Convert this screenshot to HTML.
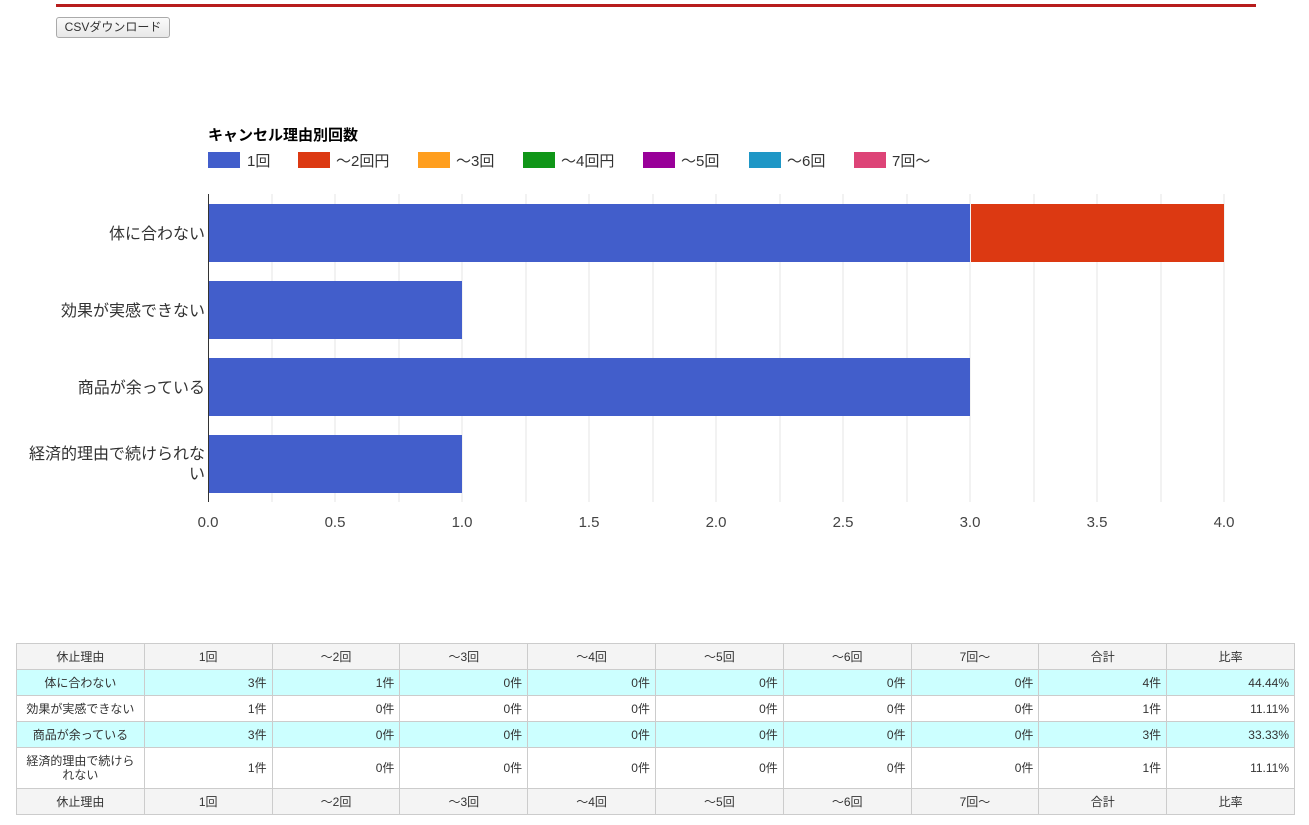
<!DOCTYPE html>
<html><head><meta charset="utf-8"><style>
body{margin:0;width:1309px;height:825px;background:#fff;font-family:"Liberation Sans","Noto Sans CJK JP",sans-serif;position:relative;overflow:hidden}
.bar{position:absolute;left:56px;top:4px;width:1200px;height:3px;background:#b71c1c}
.btn{position:absolute;left:56px;top:17px;border:1px solid #aaa;border-radius:3px;background:linear-gradient(#fafafa,#e8e8e8);font-size:12px;color:#333;text-align:center;line-height:19px;box-sizing:border-box;width:114px;height:21px}
svg{position:absolute;left:0;top:0}
table{position:absolute;left:16px;top:643px;border-collapse:collapse;width:1279px;table-layout:fixed;font-size:12px;color:#333}
td,th{border:1px solid #ccc;padding:0 5px;height:25px;font-weight:normal}
th{background:#f4f4f4;text-align:center}
td{text-align:right}
td.n{text-align:center;padding:0 2px}
tr.c td{background:#ccffff}
tr.t td{height:40px;line-height:14px}
</style></head><body>
<div class="bar"></div>
<div class="btn">CSVダウンロード</div>
<svg width="1309" height="640" font-family="Liberation Sans, Noto Sans CJK JP, sans-serif">
<text x="208" y="140" font-size="15" font-weight="bold" fill="#000">キャンセル理由別回数</text>
<g font-size="15" fill="#333">
<rect x="208" y="152" width="32" height="16" fill="#425ecb"/><text x="247" y="166">1回</text>
<rect x="298" y="152" width="32" height="16" fill="#dc3912"/><text x="336" y="166">～2回円</text>
<rect x="418" y="152" width="32" height="16" fill="#ff9e1e"/><text x="456" y="166">～3回</text>
<rect x="523" y="152" width="32" height="16" fill="#109618" /><text x="561" y="166">～4回円</text>
<rect x="643" y="152" width="32" height="16" fill="#990099"/><text x="681" y="166">～5回</text>
<rect x="749" y="152" width="32" height="16" fill="#1f97c6"/><text x="787" y="166">～6回</text>
<rect x="854" y="152" width="32" height="16" fill="#dd4477"/><text x="892" y="166">7回～</text>
</g>
<g stroke="#e4e4e4" stroke-width="1">
<line x1="272" y1="194" x2="272" y2="502"/><line x1="335" y1="194" x2="335" y2="502"/><line x1="399" y1="194" x2="399" y2="502"/><line x1="462" y1="194" x2="462" y2="502"/><line x1="526" y1="194" x2="526" y2="502"/><line x1="589" y1="194" x2="589" y2="502"/><line x1="653" y1="194" x2="653" y2="502"/><line x1="716" y1="194" x2="716" y2="502"/><line x1="780" y1="194" x2="780" y2="502"/><line x1="843" y1="194" x2="843" y2="502"/><line x1="907" y1="194" x2="907" y2="502"/><line x1="970" y1="194" x2="970" y2="502"/><line x1="1034" y1="194" x2="1034" y2="502"/><line x1="1097" y1="194" x2="1097" y2="502"/><line x1="1161" y1="194" x2="1161" y2="502"/><line x1="1224" y1="194" x2="1224" y2="502"/>
</g>
<rect x="208" y="204" width="762" height="58" fill="#425ecb"/>
<rect x="971" y="204" width="253" height="58" fill="#dc3912"/>
<rect x="208" y="281" width="254" height="58" fill="#425ecb"/>
<rect x="208" y="358" width="762" height="58" fill="#425ecb"/>
<rect x="208" y="435" width="254" height="58" fill="#425ecb"/>
<line x1="208.5" y1="194" x2="208.5" y2="502" stroke="#333"/>
<g font-size="16" fill="#333" text-anchor="end">
<text x="205" y="239">体に合わない</text>
<text x="205" y="316">効果が実感できない</text>
<text x="205" y="393">商品が余っている</text>
<text x="205" y="459">経済的理由で続けられな</text>
<text x="205" y="479">い</text>
</g>
<g font-size="15" fill="#444" text-anchor="middle">
<text x="208" y="527">0.0</text><text x="335" y="527">0.5</text><text x="462" y="527">1.0</text><text x="589" y="527">1.5</text><text x="716" y="527">2.0</text><text x="843" y="527">2.5</text><text x="970" y="527">3.0</text><text x="1097" y="527">3.5</text><text x="1224" y="527">4.0</text>
</g>
</svg>
<table>
<tr><th>休止理由</th><th>1回</th><th>～2回</th><th>～3回</th><th>～4回</th><th>～5回</th><th>～6回</th><th>7回～</th><th>合計</th><th>比率</th></tr>
<tr class="c"><td class="n">体に合わない</td><td>3件</td><td>1件</td><td>0件</td><td>0件</td><td>0件</td><td>0件</td><td>0件</td><td>4件</td><td>44.44%</td></tr>
<tr><td class="n">効果が実感できない</td><td>1件</td><td>0件</td><td>0件</td><td>0件</td><td>0件</td><td>0件</td><td>0件</td><td>1件</td><td>11.11%</td></tr>
<tr class="c"><td class="n">商品が余っている</td><td>3件</td><td>0件</td><td>0件</td><td>0件</td><td>0件</td><td>0件</td><td>0件</td><td>3件</td><td>33.33%</td></tr>
<tr class="t"><td class="n">経済的理由で続けら<br>れない</td><td>1件</td><td>0件</td><td>0件</td><td>0件</td><td>0件</td><td>0件</td><td>0件</td><td>1件</td><td>11.11%</td></tr>
<tr><th>休止理由</th><th>1回</th><th>～2回</th><th>～3回</th><th>～4回</th><th>～5回</th><th>～6回</th><th>7回～</th><th>合計</th><th>比率</th></tr>
</table>
</body></html>
